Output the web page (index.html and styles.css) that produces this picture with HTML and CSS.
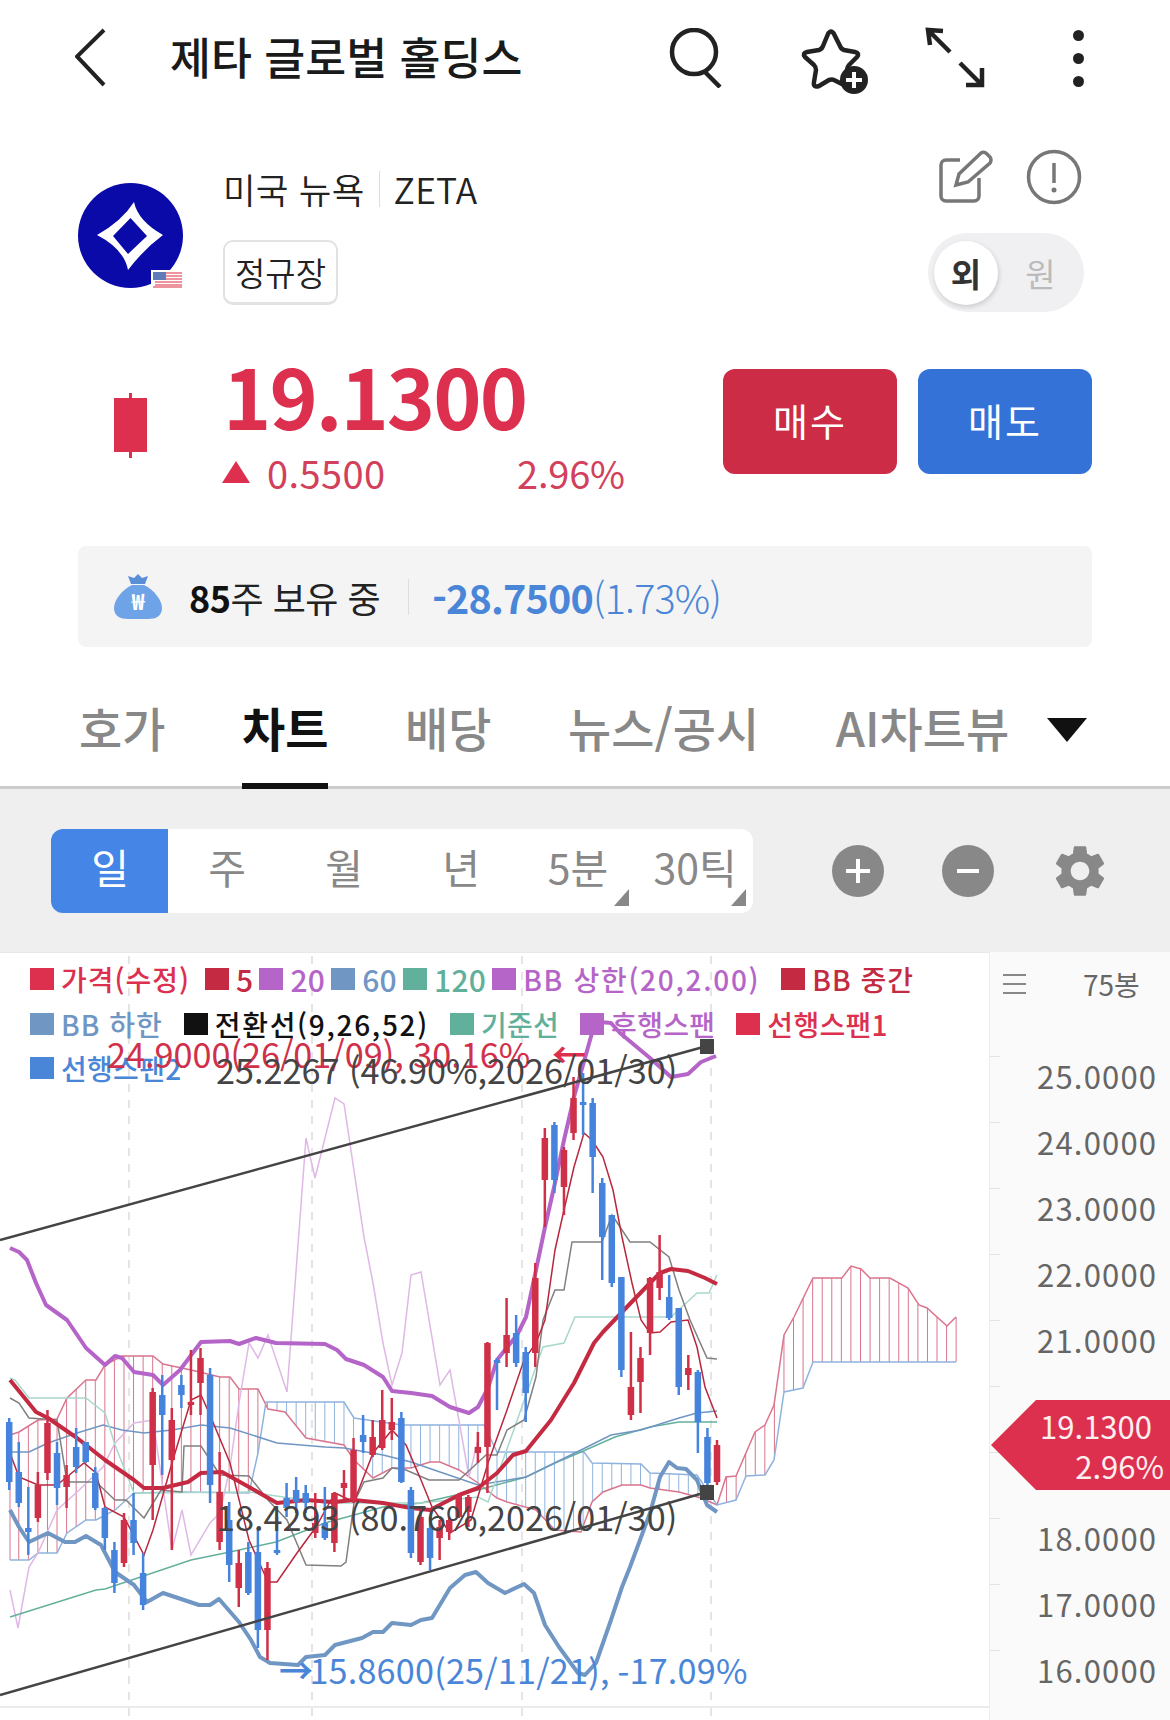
FILE: index.html
```html
<!DOCTYPE html>
<html lang="ko">
<head>
    <meta charset="UTF-8">
    <meta name="viewport" content="width=device-width, initial-scale=1.0">
    <title>제타 글로벌 홀딩스</title>
    <link rel="stylesheet" href="styles.css">
</head>
<body>
    <header class="top-bar">
        <svg class="icon-back" viewBox="0 0 32 60"><path d="M29 2 2 28.500 29 57"/></svg>
        <h1 class="stock-name">제타 글로벌 홀딩스</h1>
        <svg class="icon-search" viewBox="0 0 56 60"><circle cx="26" cy="24" r="22"/><path d="M37 44 52 59"/></svg>
        <svg class="icon-star" viewBox="0 0 72 68">
            <path class="star-line" d="M29 6Q32 1 35 6L41 18Q42 21 45 22L56 24Q61 25 58 29L50 37Q48 39 48 42L50 54Q50 60 45 57L35 52Q33 51 30 52L20 58Q14 60 15 54L17 42Q17 39 15 37L6 29Q3 25 8 24L20 22Q23 21 24 18Z"/>
            <circle cx="55" cy="52" r="14"/>
            <path class="star-plus" d="M55 44V60M47 52H63"/>
        </svg>
        <svg class="icon-expand" viewBox="0 0 62 64"><path d="M19 5 4 4 6 19M4 4 26 26M58 42V59H42M36 37 58 59"/></svg>
        <div class="dots"><span></span><span></span><span></span></div>
    </header>

    <section class="stock-info">
        <div class="logo">
            <svg viewBox="0 0 105 105"><path d="M56 19Q60 38 85 52 66 66 50 87 46 66 19 52 44 38 56 19ZM52.500 35 35 53 50 71 69 53Z"/></svg>
            <svg class="flag" viewBox="0 0 32 18">
                <rect width="32" height="18" fill="#fff"/>
                <path class="flag-stripes" d="M4 3H31M4 6H31M4 9H31M4 12H31M4 15H31M2 17H31"/>
                <rect x="2" y="2" width="13" height="8" fill="#5f7cb8"/>
            </svg>
        </div>
        <div class="info-text">
            <div class="market">미국 뉴욕<span class="market-sep"></span>ZETA</div>
            <div class="session-badge">정규장</div>
        </div>
        <div class="info-side">
            <div class="side-icons">
                <svg class="icon-edit" viewBox="0 0 54 54">
                    <path d="M21 10H7A5 5 0 0 0 2 15V46A5 5 0 0 0 7 51H35A5 5 0 0 0 40 46V28"/>
                    <path d="M17 35 20 24 42 3Q45 1 48 4L51 7Q53 10 51 13L29 32Z"/>
                </svg>
                <svg class="icon-alert" viewBox="0 0 56 56"><circle cx="28" cy="28" r="25.500"/><path d="M28 14V34"/><circle class="alert-dot" cx="28" cy="41" r="2.500"/></svg>
            </div>
            <div class="currency-toggle">
                <span class="toggle-on">외</span>
                <span class="toggle-off">원</span>
            </div>
        </div>
    </section>

    <section class="price-row">
        <div class="candle-mark"></div>
        <div class="price-col">
            <div class="price">19.1300</div>
            <div class="price-change">
                <span class="up-mark"></span>
                <span class="change-value">0.5500</span>
                <span class="change-rate">2.96%</span>
            </div>
        </div>
        <div class="order-buttons">
            <button type="button" class="btn-buy">매수</button>
            <button type="button" class="btn-sell">매도</button>
        </div>
    </section>

    <section class="holding">
        <svg class="icon-bag" viewBox="0 0 48 46">
            <path class="bag-body" d="M18 11C8 16 0 26 0 34 0 42 6 45 14 45H34C42 45 48 42 48 34 48 26 40 16 30 11Z"/>
            <path class="bag-neck" d="M17 10 14 2 20 4 24 0 28 4 34 2 31 10Z"/>
            <text x="24" y="36" class="bag-won">₩</text>
        </svg>
        <div class="holding-qty"><b>85</b>주 보유 중</div>
        <span class="holding-sep"></span>
        <div class="holding-pl"><b>-28.7500</b><span class="pl-rate">(1.73%)</span></div>
    </section>

    <nav class="tabs">
        <a class="tab">호가</a>
        <a class="tab active">차트</a>
        <a class="tab">배당</a>
        <a class="tab">뉴스/공시</a>
        <a class="tab">AI차트뷰</a>
        <span class="tab-more"></span>
    </nav>

    <div class="toolbar">
        <div class="periods">
            <button type="button" class="period active">일</button>
            <button type="button" class="period">주</button>
            <button type="button" class="period">월</button>
            <button type="button" class="period">년</button>
            <button type="button" class="period corner">5분</button>
            <button type="button" class="period corner">30틱</button>
        </div>
        <svg class="tool-zoom" viewBox="0 0 52 52"><circle cx="26" cy="26" r="26"/><path d="M26 14V38M14 26H38"/></svg>
        <svg class="tool-zoom" viewBox="0 0 52 52"><circle cx="26" cy="26" r="26"/><path d="M15 26H37"/></svg>
        <svg class="tool-gear" viewBox="0 0 24 24"><path d="M19.140 12.940c.04-.3.06-.61.06-.94 0-.32-.02-.64-.07-.94l2.030-1.580c.18-.14.23-.41.12-.61l-1.920-3.320c-.12-.22-.37-.29-.59-.22l-2.390.96c-.5-.38-1.030-.7-1.620-.94l-.36-2.540c-.04-.24-.24-.41-.48-.41h-3.840c-.24 0-.43.17-.47.41l-.36 2.540c-.59.24-1.130.57-1.620.94l-2.390-.96c-.22-.08-.47 0-.59.22L2.740 8.870c-.12.21-.08.47.12.61l2.030 1.580c-.05.3-.09.63-.09.94s.02.64.07.94l-2.030 1.580c-.18.14-.23.41-.12.61l1.920 3.320c.12.22.37.29.59.22l2.390-.96c.5.38 1.030.7 1.620.94l.36 2.540c.05.24.24.41.48.41h3.840c.24 0 .44-.17.47-.41l.36-2.540c.59-.24 1.130-.56 1.620-.94l2.390.96c.22.08.47 0 .59-.22l1.920-3.320c.12-.22.07-.47-.12-.61l-2.010-1.580zM12 15.600c-1.980 0-3.600-1.620-3.600-3.600s1.620-3.600 3.600-3.600 3.600 1.620 3.600 3.600-1.620 3.600-3.600 3.600z"/></svg>
    </div>

    <section class="chart-panel">
        <div class="chart-canvas">
            <svg id="chart" class="chart-svg" viewBox="0 952 989 768"></svg>

            <div class="legend">
                <div class="legend-row">
                    <span class="legend-item first c-price">가격(수정)</span>
                    <span class="legend-item tight num c-ma5">5</span>
                    <span class="legend-item tight num c-purple">20</span>
                    <span class="legend-item tight num c-steel">60</span>
                    <span class="legend-item tight num c-teal">120</span>
                    <span class="legend-item wide c-purple">BB 상한(20,2.00)</span>
                    <span class="legend-item latin c-ma5">BB 중간</span>
                </div>
                <div class="legend-row">
                    <span class="legend-item latin c-steel">BB 하한</span>
                    <span class="legend-item wide c-black">전환선(9,26,52)</span>
                    <span class="legend-item c-teal">기준선</span>
                    <span class="legend-item c-purple">후행스팬</span>
                    <span class="legend-item c-price">선행스팬1</span>
                </div>
                <div class="legend-row">
                    <span class="legend-item c-blue">선행스팬2</span>
                </div>
            </div>

            <div class="mark mark-high">24.9000(26/01/09), 30.16%</div>
            <div class="mark mark-high-arrow">←</div>
            <div class="mark mark-top">25.2267 (46.90%,2026/01/30)</div>
            <div class="mark mark-bottom">18.4293 (80.76%,2026/01/30)</div>
            <div class="mark mark-low"><b>→</b>15.8600(25/11/21), -17.09%</div>
        </div>

        <aside class="axis">
            <div class="axis-head">
                <span class="axis-menu"></span>
                <span class="axis-count">75봉</span>
            </div>
            <ul class="axis-scale">
                <li>25.0000</li>
                <li>24.0000</li>
                <li>23.0000</li>
                <li>22.0000</li>
                <li>21.0000</li>
                <li></li>
                <li></li>
                <li>18.0000</li>
                <li>17.0000</li>
                <li>16.0000</li>
            </ul>
            <div class="price-tag">
                <span>19.1300</span>
                <span>2.96%</span>
            </div>
        </aside>
    </section>

    <script src="chart.js"></script>
</body>
</html>
```

FILE: styles.css
```css
* {
    box-sizing: border-box;
}
html, body {
    margin: 0;
    padding: 0;
}
body {
    width: 1170px;
    height: 1720px;
    overflow: hidden;
    background-color: #fff;
    color: #222;
    font-family: "Noto Sans CJK KR", "Noto Sans", sans-serif;
}
button {
    font-family: inherit;
    border: none;
    padding: 0;
}

/* top bar */
.top-bar {
    display: flex;
    align-items: center;
    height: 116px;
    padding-left: 75px;
}
.icon-back {
    width: 32px;
    height: 60px;
    fill: none;
    stroke: #222;
    stroke-width: 4;
}
.stock-name {
    margin: -4px 0 0 63px;
    width: 498px;
    font-size: 44.500px;
    font-weight: 500;
    line-height: 50px;
    color: #1a1a1a;
    white-space: nowrap;
}
.icon-search {
    width: 56px;
    height: 60px;
    fill: none;
    stroke: #222;
    stroke-width: 4.5;
}
.icon-star {
    width: 72px;
    height: 68px;
    margin-left: 75px;
    margin-top: 8px;
}
.star-line {
    fill: none;
    stroke: #222;
    stroke-width: 4.5;
    stroke-linejoin: round;
}
.icon-star circle {
    fill: #222;
}
.star-plus {
    stroke: #fff;
    stroke-width: 4;
}
.icon-expand {
    width: 62px;
    height: 64px;
    margin-left: 53px;
    fill: none;
    stroke: #222;
    stroke-width: 4.5;
}
.dots {
    display: flex;
    flex-direction: column;
    gap: 12px;
    margin-left: 87px;
}
.dots span {
    width: 11px;
    height: 11px;
    border-radius: 50%;
    background-color: #222;
}

/* stock info */
.stock-info {
    display: flex;
    height: 162px;
    margin-top: 34px;
    padding: 0 86px 0 78px;
}
.logo {
    position: relative;
    width: 105px;
    height: 105px;
    margin-top: 33px;
    border-radius: 50%;
    background-color: #0a0aa8;
}
.logo svg {
    display: block;
    width: 105px;
    height: 105px;
    fill: #fff;
}
.logo .flag {
    position: absolute;
    right: 0;
    bottom: 0;
    width: 32px;
    height: 18px;
}
.flag-stripes {
    fill: none;
    stroke: #e8717f;
    stroke-width: 1.500;
}
.info-text {
    margin-left: 40px;
    padding-top: 19px;
}
.market {
    display: flex;
    align-items: center;
    height: 40px;
    font-size: 35.500px;
    font-weight: 350;
    line-height: 40px;
    letter-spacing: 0.2px;
    color: #222;
}
.market-sep {
    width: 1px;
    height: 36px;
    margin: 0 14px;
    background-color: #ddd;
}
.session-badge {
    display: flex;
    align-items: center;
    justify-content: center;
    width: 115px;
    height: 65px;
    margin-top: 31px;
    border: 2px solid #e2e2e2;
    border-bottom-width: 3px;
    border-radius: 10px;
    font-size: 33px;
    font-weight: 350;
}
.info-side {
    display: flex;
    flex-direction: column;
    align-items: flex-end;
    margin-left: auto;
}
.side-icons {
    display: flex;
    align-items: center;
    gap: 33px;
    height: 54px;
    margin-right: 2px;
}
.icon-edit {
    width: 54px;
    height: 54px;
    fill: none;
    stroke: #777;
    stroke-width: 3.500;
}
.icon-alert {
    width: 56px;
    height: 56px;
    fill: none;
    stroke: #777;
    stroke-width: 3.500;
}
.alert-dot {
    fill: #777;
    stroke: none;
}
.currency-toggle {
    display: flex;
    align-items: center;
    width: 156px;
    height: 79px;
    margin-top: 29px;
    padding-left: 6px;
    border-radius: 40px;
    background-color: #f0f0f3;
    font-size: 33px;
}
.toggle-on {
    display: flex;
    align-items: center;
    justify-content: center;
    width: 64px;
    height: 64px;
    border-radius: 50%;
    background-color: #fff;
    box-shadow: 1px 2px 5px rgba(0, 0, 0, 0.16);
    font-weight: 700;
    color: #333;
}
.toggle-off {
    width: 85px;
    text-align: center;
    color: #bbb;
}

/* price */
.price-row {
    display: flex;
    align-items: flex-start;
    margin-top: 55px;
    padding: 0 78px 0 114px;
}
.candle-mark {
    position: relative;
    width: 33px;
    height: 54px;
    margin-top: 31px;
    background-color: #dc304e;
}
.candle-mark::before {
    content: "";
    position: absolute;
    left: 15px;
    top: -5px;
    width: 3px;
    height: 65px;
    background-color: #dc304e;
}
.price-col {
    margin-left: 76px;
    width: 500px;
}
.price {
    margin-top: -3px;
    font-size: 82px;
    font-weight: 700;
    line-height: 62px;
    letter-spacing: -2px;
    color: #dc304e;
}
.price-change {
    display: flex;
    align-items: center;
    height: 40px;
    margin-top: 26px;
    padding-left: 5px;
    font-size: 38px;
    letter-spacing: -0.2px;
    color: #d2405c;
}
.up-mark {
    width: 0;
    height: 0;
    margin-left: -6px;
    border-left: 14px solid transparent;
    border-right: 14px solid transparent;
    border-bottom: 22px solid #dc304e;
}
.change-value {
    width: 250px;
    margin-left: 17px;
    letter-spacing: 0.4px;
}
.order-buttons {
    display: flex;
    gap: 21px;
    margin-top: 2px;
}
.order-buttons button {
    width: 174px;
    height: 105px;
    padding-bottom: 5px;
    border-radius: 12px;
    color: #fff;
    font-size: 38px;
    letter-spacing: 2px;
}
.btn-buy {
    background-color: #cc2c46;
}
.btn-sell {
    background-color: #3572d8;
}

/* holding */
.holding {
    display: flex;
    align-items: center;
    height: 101px;
    margin: 54px 78px 0 78px;
    padding-left: 36px;
    border-radius: 8px;
    background-color: #f4f4f5;
    font-size: 36px;
}
.icon-bag {
    width: 48px;
    height: 46px;
    margin-right: 27px;
}
.bag-body {
    fill: #6fa3e8;
}
.bag-neck {
    fill: #5a8fd8;
}
.bag-won {
    fill: #fff;
    font-size: 22px;
    font-weight: 700;
    text-anchor: middle;
}
.holding-qty {
    font-weight: 400;
    letter-spacing: -0.5px;
    color: #222;
}
.holding-qty b {
    font-weight: 700;
    color: #111;
}
.holding-sep {
    width: 1px;
    height: 36px;
    margin: 0 23px 0 28px;
    background-color: #ddd;
}
.holding-pl {
    font-size: 39.500px;
    letter-spacing: -0.8px;
    color: #4a86d8;
}
.holding-pl b {
    font-weight: 700;
}
.pl-rate {
    font-weight: 300;
}

/* tabs */
.tabs {
    display: flex;
    gap: 76.500px;
    height: 142px;
    padding: 52px 0 0 79px;
    border-bottom: 3px solid #ccc;
}
.tab {
    position: relative;
    font-size: 47px;
    font-weight: 500;
    line-height: 56px;
    color: #888;
    white-space: nowrap;
}
.tab.active {
    font-weight: 700;
    color: #111;
}
.tab.active::after {
    content: "";
    position: absolute;
    left: 0;
    right: 0;
    top: 84px;
    height: 6px;
    background-color: #111;
}
.tab-more {
    width: 0;
    height: 0;
    margin: 19px 0 0 -39px;
    border-left: 20px solid transparent;
    border-right: 20px solid transparent;
    border-top: 24px solid #111;
}

/* period toolbar */
.toolbar {
    display: flex;
    align-items: center;
    height: 163px;
    padding-left: 51px;
    background-color: #efefef;
}
.periods {
    display: flex;
    width: 702px;
    height: 84px;
    border-radius: 12px;
    background-color: #fff;
    overflow: hidden;
}
.period {
    position: relative;
    width: 117px;
    padding: 0 0 9px 1px;
    background-color: transparent;
    font-size: 41px;
    color: #888;
}
.period.active {
    background-color: #4585e6;
    color: #fff;
}
.period.corner::after {
    content: "";
    position: absolute;
    right: 7px;
    bottom: 7px;
    border-left: 15px solid transparent;
    border-bottom: 17px solid #888;
}
.tool-zoom {
    width: 52px;
    height: 52px;
    margin-left: 58px;
}
.tool-zoom:first-of-type {
    margin-left: 79px;
}
.tool-zoom circle {
    fill: #888;
}
.tool-zoom path {
    stroke: #fff;
    stroke-width: 4;
}
.tool-gear {
    width: 62px;
    height: 62px;
    margin-left: 55px;
    fill: #888;
}

/* chart */
.chart-panel {
    display: flex;
    height: 768px;
}
.chart-canvas {
    position: relative;
    width: 989px;
    height: 768px;
    border-top: 1px solid #e8e8e8;
}
.chart-svg {
    position: absolute;
    left: 0;
    top: -1px;
    width: 989px;
    height: 768px;
    fill: none;
}
.grid-v {
    stroke: #ddd;
    stroke-width: 1.500;
    stroke-dasharray: 8 8;
}
.grid-h {
    stroke: #e4e4e4;
    stroke-width: 1.500;
}
.hatch-red {
    stroke: #d9758c;
    stroke-width: 1;
}
.hatch-blue {
    stroke: #8fb3de;
    stroke-width: 1;
}
.l-span1 {
    stroke: #d9758c;
    stroke-width: 1.500;
}
.l-span2 {
    stroke: #8fb3de;
    stroke-width: 1.500;
}
.l-pale {
    stroke: #dfb8e6;
    stroke-width: 1.500;
}
.l-green {
    stroke: #64b09b;
    stroke-width: 1.500;
}
.l-steel {
    stroke: #7096c4;
    stroke-width: 1.500;
}
.l-mint {
    stroke: #a8d8cb;
    stroke-width: 1.500;
}
.l-gray {
    stroke: #808080;
    stroke-width: 1.500;
}
.l-thin-red {
    stroke: #b8273d;
    stroke-width: 1.500;
}
.l-bb-up {
    stroke: #b565c8;
    stroke-width: 4;
    stroke-linejoin: round;
}
.l-bb-low {
    stroke: #7096c4;
    stroke-width: 4;
    stroke-linejoin: round;
}
.l-bb-mid {
    stroke: #c42a41;
    stroke-width: 4;
    stroke-linejoin: round;
}
.candle-r {
    fill: #d02f48;
}
.candle-b {
    fill: #4583dc;
}
.trend {
    stroke: #444;
    stroke-width: 2.500;
}
.trend-end {
    fill: #444;
}

.legend {
    position: absolute;
    left: 30px;
    top: 4px;
    font-size: 28px;
    font-weight: 500;
    letter-spacing: 0.3px;
    line-height: 44px;
}
.legend-row {
    display: flex;
    height: 44.500px;
    white-space: nowrap;
}
.legend-item {
    display: flex;
    align-items: center;
    margin-right: 21px;
}
.legend-item.first {
    letter-spacing: 1px;
    margin-right: 15px;
}
.legend-item.tight {
    margin-right: 6px;
}
.legend-item.num {
    font-size: 30px;
    letter-spacing: 0.3px;
}
.legend-item.latin {
    letter-spacing: 1px;
}
.legend-item.wide {
    letter-spacing: 1.700px;
}
.legend-item::before {
    content: "";
    width: 24px;
    height: 22px;
    margin-right: 7px;
    background-color: currentColor;
}
.c-price { color: #dc304e; }
.c-ma5 { color: #c42a41; }
.c-purple { color: #b565c8; }
.c-steel { color: #7096c4; }
.c-teal { color: #60b09b; }
.c-black { color: #111; }
.c-blue { color: #4a86d8; }

.mark {
    position: absolute;
    font-size: 34.200px;
    line-height: 40px;
    white-space: nowrap;
}
.mark b {
    margin-right: -4px;
    font-weight: 700;
}
.mark-high {
    left: 107px;
    top: 80px;
    color: #d0304a;
}
.mark-high-arrow {
    left: 552px;
    top: 80px;
    font-weight: 700;
    color: #dc304e;
}
.mark-top {
    left: 216px;
    top: 96px;
    color: #444;
}
.mark-bottom {
    left: 216px;
    top: 543px;
    color: #444;
}
.mark-low {
    left: 279px;
    top: 696px;
    letter-spacing: 0.2px;
    color: #4a86d8;
}

/* price axis */
.axis {
    position: relative;
    flex: 1;
    border-left: 1px solid #eee;
    background-color: #fafafa;
}
.axis-head {
    display: flex;
    align-items: center;
    height: 64px;
    padding-left: 13px;
}
.axis-menu {
    width: 23px;
    height: 20px;
    border-top: 2px solid #888;
    border-bottom: 2px solid #888;
    background: linear-gradient(#888, #888) center / 100% 2px no-repeat;
}
.axis-count {
    margin-left: 57px;
    font-size: 28px;
    color: #666;
}
.axis-scale {
    margin: 40px 0 0;
    padding: 0;
    list-style: none;
}
.axis-scale li {
    position: relative;
    height: 66px;
    padding-left: 47px;
    font-size: 31px;
    line-height: 40px;
    letter-spacing: 1.200px;
    color: #666;
}
.axis-scale li::before {
    content: "";
    position: absolute;
    left: 0;
    top: 0;
    width: 10px;
    height: 1px;
    background-color: #e4e4e4;
}
.price-tag {
    position: absolute;
    left: 1px;
    top: 448px;
    display: flex;
    flex-direction: column;
    align-items: flex-end;
    width: 179px;
    height: 90px;
    padding: 6px 6px 0 0;
    background-color: #dc304e;
    clip-path: polygon(0 50%, 45px 0, 100% 0, 100% 100%, 45px 100%);
    color: #fdeef0;
    font-size: 31px;
    line-height: 40px;
}
.price-tag span:first-child {
    margin-right: 12px;
}
```

FILE: chart.js
```js
var NS = 'http://www.w3.org/2000/svg';
var svg = document.getElementById('chart');

var SLOT = 9.565;
var FIRST_X = 9.2;

// [wick top, body top, body bottom, wick bottom, colour]
var candles = [
    [1418,1422,1482,1490,'b'],[1442,1472,1503,1507,'b'],[1487,1528,1532,1555,'b'],[1472,1485,1518,1522,'r'],
    [1410,1423,1473,1480,'r'],[1442,1453,1488,1505,'b'],[1465,1475,1487,1508,'r'],[1428,1447,1467,1473,'b'],
    [1442,1442,1462,1463,'b'],[1467,1473,1508,1510,'b'],[1507,1508,1538,1550,'b'],[1542,1550,1583,1593,'b'],
    [1513,1520,1563,1567,'r'],[1493,1520,1543,1555,'b'],[1553,1573,1605,1610,'b'],[1388,1392,1465,1520,'r'],
    [1375,1395,1415,1475,'b'],[1408,1420,1460,1550,'r'],[1375,1385,1395,1408,'b'],[1350,1402,1405,1415,'r'],
    [1348,1358,1383,1415,'r'],[1368,1375,1485,1503,'b'],[1452,1492,1542,1550,'r'],[1502,1520,1565,1582,'b'],
    [1550,1563,1588,1607,'r'],[1542,1552,1593,1595,'b'],[1528,1552,1630,1648,'b'],[1562,1568,1630,1660,'r'],
    [1517,1550,1553,1555,'b'],[1483,1498,1508,1517,'b'],[1477,1490,1502,1513,'b'],[1485,1493,1503,1513,'b'],
    [1493,1523,1533,1538,'r'],[1487,1523,1538,1540,'b'],[1492,1493,1543,1552,'r'],[1470,1483,1488,1500,'r'],
    [1438,1450,1500,1503,'r'],[1415,1435,1442,1453,'b'],[1420,1437,1455,1457,'r'],[1390,1420,1448,1450,'r'],
    [1398,1422,1430,1440,'r'],[1412,1418,1482,1483,'b'],[1487,1490,1553,1558,'b'],[1510,1517,1562,1565,'r'],
    [1517,1528,1558,1570,'b'],[1520,1527,1538,1560,'r'],[1517,1520,1532,1540,'r'],[1493,1495,1517,1518,'r'],
    [1495,1497,1512,1527,'r'],[1432,1447,1453,1463,'r'],[1342,1343,1447,1493,'r'],[1358,1360,1363,1410,'b'],
    [1298,1335,1353,1367,'r'],[1315,1333,1363,1367,'b'],[1347,1352,1393,1422,'b'],[1263,1278,1353,1367,'r'],
    [1128,1138,1180,1227,'r'],[1122,1125,1180,1193,'b'],[1147,1150,1187,1215,'r'],[1077,1098,1133,1140,'r'],
    [1073,1102,1105,1135,'b'],[1098,1103,1157,1193,'b'],[1178,1183,1237,1280,'b'],[1215,1215,1283,1287,'b'],
    [1277,1277,1370,1377,'b'],[1332,1387,1415,1420,'r'],[1347,1358,1382,1413,'r'],[1277,1278,1333,1355,'r'],
    [1235,1272,1288,1300,'r'],[1275,1297,1318,1320,'b'],[1308,1308,1387,1395,'b'],[1355,1368,1375,1390,'r'],
    [1370,1372,1422,1453,'b'],[1428,1437,1483,1487,'b'],[1440,1445,1482,1485,'r']
];

var span1 = [[10,1435],[19,1432],[38,1420],[57,1419],[67,1398],[86,1380],[96,1380],[105,1365],[122,1356],[153,1356],[163,1364],[191,1370],[220,1377],[230,1377],[239,1389],[258,1389],[268,1409],[285,1412],[306,1438],[344,1445],[354,1460],[373,1478],[392,1468],[411,1468],[430,1462],[440,1462],[459,1470],[478,1483],[497,1498],[507,1502],[536,1510],[555,1530],[581,1532],[592,1502],[603,1492],[622,1485],[641,1485],[650,1488],[679,1492],[701,1498],[717,1505],[726,1477],[736,1476],[755,1432],[765,1425],[774,1405],[784,1335],[794,1317],[813,1278],[842,1278],[851,1266],[861,1269],[870,1278],[890,1278],[908,1288],[919,1305],[927,1308],[947,1326],[956,1317]];
var span2 = [[10,1560],[29,1560],[38,1553],[57,1553],[67,1533],[86,1520],[96,1520],[115,1510],[134,1493],[182,1492],[249,1493],[258,1453],[266,1402],[344,1402],[354,1418],[402,1425],[484,1425],[497,1452],[584,1452],[592,1463],[641,1464],[650,1473],[697,1475],[717,1505],[736,1500],[746,1476],[765,1475],[774,1460],[784,1392],[803,1388],[813,1362],[956,1362]];

var lines = [
    { cls: 'l-pale', pts: [[10,1590],[18,1628],[29,1567],[38,1553],[57,1510],[76,1493],[103,1467],[115,1443],[134,1423],[153,1420],[172,1550],[182,1510],[191,1555],[210,1523],[220,1513],[230,1467],[239,1403],[249,1343],[258,1358],[268,1335],[287,1392],[306,1138],[315,1178],[335,1098],[344,1104],[364,1237],[373,1283],[383,1343],[392,1385],[402,1353],[411,1275],[421,1272],[440,1385],[450,1370],[469,1477],[478,1440]] },
    { cls: 'l-green', pts: [[10,1617],[96,1590],[105,1589],[191,1560],[230,1552],[276,1542],[325,1523],[383,1507],[421,1503],[478,1490],[526,1477],[555,1463],[581,1452],[615,1437],[650,1427],[679,1422],[717,1422]] },
    { cls: 'l-steel', pts: [[10,1452],[29,1452],[48,1443],[77,1433],[103,1425],[122,1430],[144,1433],[172,1430],[201,1425],[230,1428],[277,1443],[325,1447],[344,1448],[383,1455],[411,1462],[440,1472],[478,1485],[526,1477],[585,1448],[611,1435],[641,1430],[679,1418],[697,1413],[717,1411]] },
    { cls: 'l-mint', pts: [[10,1378],[15,1380],[29,1398],[86,1398],[105,1413],[115,1445],[134,1493],[249,1492],[325,1503],[421,1503],[478,1497],[488,1502],[513,1432],[543,1347],[564,1343],[575,1317],[671,1317],[697,1293],[709,1293],[717,1275]] },
    { cls: 'l-gray', pts: [[10,1398],[19,1403],[29,1418],[57,1420],[67,1482],[96,1482],[115,1500],[126,1500],[144,1518],[161,1490],[182,1492],[184,1446],[201,1446],[220,1475],[249,1476],[268,1500],[287,1520],[306,1565],[341,1566],[346,1562],[354,1503],[364,1482],[383,1478],[392,1468],[406,1470],[429,1480],[459,1480],[486,1455],[497,1455],[507,1430],[524,1420],[536,1377],[543,1320],[555,1290],[564,1290],[572,1242],[602,1242],[612,1215],[630,1242],[650,1242],[669,1257],[679,1290],[690,1320],[707,1358],[717,1359]] },
    { cls: 'l-thin-red', pts: [[10,1453],[19,1477],[38,1485],[57,1485],[84,1463],[96,1473],[105,1507],[124,1517],[144,1555],[153,1530],[172,1463],[191,1400],[201,1395],[210,1415],[230,1463],[249,1540],[268,1582],[277,1582],[297,1553],[316,1527],[335,1493],[354,1502],[373,1453],[392,1430],[406,1445],[421,1480],[432,1507],[450,1533],[471,1520],[488,1463],[507,1410],[524,1360],[536,1343],[545,1320],[555,1250],[564,1210],[574,1167],[584,1133],[592,1140],[603,1157],[613,1190],[622,1237],[632,1283],[641,1320],[650,1333],[660,1332],[671,1322],[688,1320],[697,1347],[705,1387],[717,1418]] },
    { cls: 'l-bb-up', pts: [[10,1248],[19,1252],[27,1260],[36,1283],[46,1305],[67,1320],[86,1348],[105,1365],[115,1356],[122,1358],[134,1372],[153,1375],[163,1385],[180,1370],[201,1342],[230,1341],[239,1344],[256,1338],[276,1343],[325,1344],[337,1350],[346,1359],[364,1365],[383,1377],[392,1391],[411,1393],[432,1396],[450,1407],[469,1413],[478,1407],[488,1388],[497,1360],[517,1335],[526,1317],[536,1270],[545,1227],[555,1183],[564,1140],[574,1097],[592,1033],[600,1022],[611,1023],[620,1033],[650,1058],[671,1077],[688,1074],[701,1062],[716,1056]] },
    { cls: 'l-bb-low', pts: [[10,1510],[19,1527],[29,1542],[48,1533],[65,1542],[75,1542],[86,1536],[101,1545],[115,1572],[134,1585],[147,1602],[163,1593],[199,1605],[210,1605],[219,1599],[239,1622],[251,1640],[260,1657],[270,1663],[298,1665],[306,1657],[325,1655],[335,1645],[362,1638],[373,1632],[383,1632],[392,1623],[411,1625],[421,1620],[432,1618],[450,1588],[465,1575],[476,1572],[488,1583],[505,1593],[524,1584],[534,1593],[545,1625],[559,1647],[578,1673],[585,1675],[596,1663],[611,1620],[622,1587],[630,1567],[650,1513],[660,1477],[669,1462],[677,1468],[686,1469],[697,1480],[701,1490],[707,1505],[717,1512]] },
    { cls: 'l-bb-mid', pts: [[10,1380],[36,1412],[48,1418],[77,1438],[105,1460],[134,1480],[144,1488],[163,1488],[188,1482],[201,1473],[222,1472],[249,1487],[277,1503],[306,1500],[333,1502],[354,1500],[383,1503],[411,1508],[430,1510],[459,1495],[478,1488],[497,1473],[513,1455],[526,1451],[551,1420],[574,1383],[594,1343],[603,1332],[624,1310],[650,1283],[660,1273],[671,1269],[688,1271],[705,1278],[717,1284]] }
];

function add(tag, attrs) {
    var el = document.createElementNS(NS, tag);
    for (var key in attrs) {
        el.setAttribute(key, attrs[key]);
    }
    svg.appendChild(el);
    return el;
}

function polyline(cls, pts) {
    add('polyline', { 'class': cls, points: pts.map(function(p) { return p.join(','); }).join(' ') });
}

// y of a polyline at x, straight between its points
function yAt(pts, x) {
    for (var i = 1; i < pts.length; i++) {
        if (x <= pts[i][0]) {
            var t = (x - pts[i - 1][0]) / (pts[i][0] - pts[i - 1][0]);
            return pts[i - 1][1] + t * (pts[i][1] - pts[i - 1][1]);
        }
    }
    return pts[pts.length - 1][1];
}

// grid
[129, 312, 522, 711].forEach(function(x) {
    add('line', { 'class': 'grid-v', x1: x, x2: x, y1: 956, y2: 1720 });
});
add('line', { 'class': 'grid-h', x1: 0, x2: 989, y1: 1707, y2: 1707 });

// cloud hatching
for (var n = 0; n < 100; n++) {
    var hatchX = Math.max(FIRST_X + n * SLOT, 10);
    var y1 = yAt(span1, hatchX);
    var y2 = yAt(span2, hatchX);
    add('line', { 'class': y1 < y2 ? 'hatch-red' : 'hatch-blue', x1: hatchX, x2: hatchX, y1: y1, y2: y2 });
}
polyline('l-span1', span1);
polyline('l-span2', span2);

lines.forEach(function(line) {
    polyline(line.cls, line.pts);
});

// candles
candles.forEach(function(c, i) {
    var cx = FIRST_X + i * SLOT;
    var cls = c[4] === 'r' ? 'candle-r' : 'candle-b';
    add('rect', { 'class': cls, x: cx - 1.25, y: c[0], width: 2.5, height: c[3] - c[0] });
    add('rect', { 'class': cls, x: cx - 3.25, y: c[1], width: 6.5, height: Math.max(c[2] - c[1], 2) });
});

// trend channel
add('line', { 'class': 'trend', x1: 0, y1: 1240, x2: 707, y2: 1046 });
add('line', { 'class': 'trend', x1: 0, y1: 1695, x2: 707, y2: 1492 });
add('rect', { 'class': 'trend-end', x: 700, y: 1039, width: 14, height: 15 });
add('rect', { 'class': 'trend-end', x: 700, y: 1485, width: 14, height: 15 });
```
